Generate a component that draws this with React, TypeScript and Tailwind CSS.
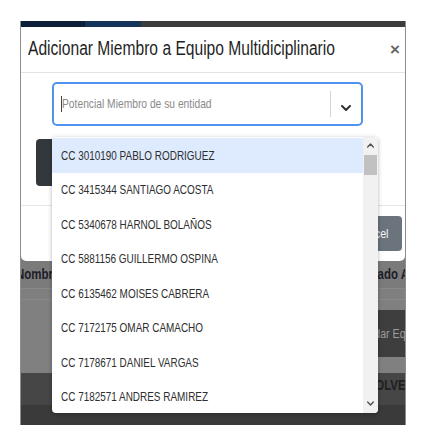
import React from 'react';

const sans = { fontFamily: '"Liberation Sans", Arial, sans-serif' };

const members = [
  'CC 3010190 PABLO RODRIGUEZ',
  'CC 3415344 SANTIAGO ACOSTA',
  'CC 5340678 HARNOL BOLAÑOS',
  'CC 5881156 GUILLERMO OSPINA',
  'CC 6135462 MOISES CABRERA',
  'CC 7172175 OMAR CAMACHO',
  'CC 7178671 DANIEL VARGAS',
  'CC 7182571 ANDRES RAMIREZ',
];

function Chevron({ up = false, className = '' }: { up?: boolean; className?: string }) {
  return (
    <svg viewBox="0 0 10 6" className={className} fill="none" stroke="currentColor" strokeWidth="2" strokeLinecap="round" strokeLinejoin="round">
      <path d={up ? 'M1 5 L5 1 L9 5' : 'M1 1 L5 5 L9 1'} />
    </svg>
  );
}

export default function App() {
  return (
    <div className="w-[423px] h-[440px] bg-white pt-[21px] pl-[20px]" style={sans}>
      <div className="relative w-[386px] h-[404px] overflow-hidden bg-[#7b7b7b] border-x border-[#8e8e8e]">
        {/* strip of the page behind */}
        <div className="flex h-[6px]">
          <div className="w-[64px] bg-[#0b1f38]" />
          <div className="w-[56px] bg-[#15345a]" />
          <div className="flex-1 bg-[#3c3c3c]" />
        </div>

        {/* Modal */}
        <div className="bg-white h-[234px] rounded-b-[5px] flex flex-col">
          <div className="h-[46px] flex items-center justify-between pl-[7px] pr-[5px] border-b border-[#e3e3e3]">
            <div className="w-[310px] flex-none">
              <h2 className="text-[20px] text-[#1f1f1f] leading-none pt-[1px] whitespace-nowrap inline-block origin-left scale-x-[0.78]">
                Adicionar Miembro a Equipo Multidiciplinario
              </h2>
            </div>
            <span className="text-[17px] font-bold text-[#666] leading-none">×</span>
          </div>
          <div className="h-[133px] pt-[9px] border-b border-[#e6e6e6]">
            <div className="ml-[31px] w-[311px] h-[44px] rounded-[5px] border-2 border-[#4f93ee] flex items-center">
              <div className="flex-1 flex items-center pl-[7px] overflow-hidden">
                <span className="w-px h-[16px] bg-[#444] flex-none" />
                <span className="text-[13px] text-[#8a8a8a] whitespace-nowrap inline-block origin-left scale-x-[0.79]">
                  Potencial Miembro de su entidad
                </span>
              </div>
              <span className="w-px h-[26px] bg-[#d4d4d4]" />
              <div className="w-[30px] flex justify-center pt-[8px]">
                <Chevron className="w-[10px] h-[6px] text-[#333]" />
              </div>
            </div>
            <div className="ml-[15px] mt-[13px] w-[120px] h-[47px] rounded-[4px] bg-[#33383d]" />
          </div>
          <div className="flex-1 flex justify-end items-start pt-[10px] pr-[3px]">
            <div className="h-[35px] pl-[12px] pr-[14px] rounded-[4px] bg-[#6b747c] text-[#f4f4f4] text-[13px] flex items-center">
              <span className="inline-block origin-right scale-x-[0.82]">Cancel</span>
            </div>
          </div>
        </div>

        {/* page behind the dimmed overlay */}
        <div className="h-[27px] flex items-center justify-between text-[14px] font-bold text-[#1d1d27] whitespace-nowrap">
          <span className="-ml-[5px] inline-block origin-left scale-x-[0.82]">Nombre</span>
          <span className="-mr-[31px] inline-block origin-right scale-x-[0.82]">Estado Actual</span>
        </div>
        <div className="h-[12px] bg-[#7f7f7f] border-t border-b border-[#888]" />
        <div className="h-[73px] bg-[#808080] flex justify-end items-start pt-[10px]">
          <div className="h-[47px] -mr-[33px] px-[12px] bg-[#3e3e3e] text-[#9c9c9c] text-[13px] flex items-center whitespace-nowrap">
            <span className="inline-block origin-right scale-x-[0.82]">Guardar Equipo</span>
          </div>
        </div>
        <div className="h-[32px] bg-[#464646] flex justify-end items-start pt-[2px]">
          <span className="-mr-[9px] text-[14px] font-bold text-[#1f1f1f] inline-block origin-right scale-x-[0.82]">DEVOLVER</span>
        </div>
        <div className="h-[20px] bg-[#3a3a3a]" />

        {/* open dropdown menu */}
        <div className="absolute left-[31px] top-[116px] w-[326px] h-[276px] bg-white rounded-[4px] shadow-[0_1px_4px_rgba(0,0,0,0.3)] flex overflow-hidden">
          <div className="flex-1 pt-px">
            {members.map((m, i) => (
              <div
                key={m}
                className={`h-[34.5px] flex items-center pl-[9px] text-[13px] text-[#2e2e2e] ${i === 0 ? 'bg-[#deebff]' : ''}`}
              >
                <span className="whitespace-nowrap inline-block origin-left scale-x-[0.765]">{m}</span>
              </div>
            ))}
          </div>
          <div className="w-[15px] bg-[#f1f1f1] flex flex-col items-center">
            <Chevron up className="w-[7px] h-[5px] mt-[6px] text-[#505050]" />
            <div className="w-[13px] h-[20px] mt-[7px] bg-[#c1c1c1]" />
            <div className="flex-1" />
            <Chevron className="w-[7px] h-[5px] mb-[7px] text-[#505050]" />
          </div>
        </div>
      </div>
    </div>
  );
}
